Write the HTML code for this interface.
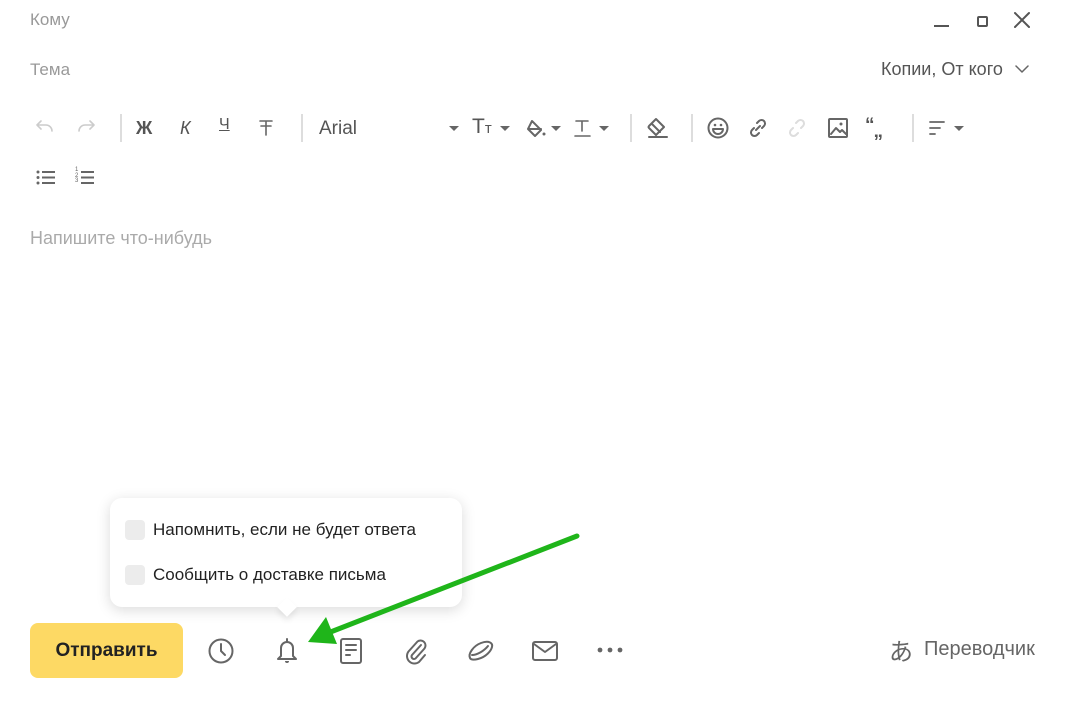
<!DOCTYPE html>
<html><head><meta charset="utf-8"><style>
body{margin:0;width:1076px;height:702px;background:#fff;font-family:"Liberation Sans",sans-serif;position:relative;overflow:hidden}
.a{position:absolute}
.g{color:#999;font-size:17px}
svg{position:absolute;overflow:visible}
.ic{stroke:#666;fill:none;stroke-width:2;stroke-linecap:round;stroke-linejoin:round}
.sep{position:absolute;width:2px;height:28px;background:#ddd;top:114px}
.pop{position:absolute;left:110px;top:498px;width:352px;height:109px;background:#fff;border-radius:12px;box-shadow:0 3px 14px rgba(0,0,0,.15)}
.cb{position:absolute;left:15px;width:20px;height:20px;border-radius:4px;background:#ececec}
.pt{position:absolute;left:43px;font-size:17px;color:#222}
</style></head><body>
<div class="a g" style="left:30px;top:10px">Кому</div>
<div class="a g" style="left:30px;top:60px">Тема</div>
<div class="a" style="left:881px;top:59px;font-size:18px;color:#555">Копии, От кого</div>
<svg style="left:1015px;top:64px" width="14" height="10"><path class="ic" style="stroke-width:1.5" d="M1 2l6 6 6-6"/></svg>
<div class="a" style="left:934px;top:25px;width:15px;height:2px;background:#555"></div>
<div class="a" style="left:977px;top:16px;width:7px;height:7px;border:2px solid #555;border-radius:2px"></div>
<svg style="left:1014px;top:12px" width="16" height="16"><path class="ic" style="stroke:#555" d="M1 1l14 14M15 1L1 15"/></svg>

<svg style="left:36px;top:120px" width="18" height="14"><path class="ic" style="stroke:#ccc;stroke-width:1.6" d="M5 1L1 5l4 4M1 5h9a6 6 0 016 6"/></svg>
<svg style="left:77px;top:120px" width="18" height="14"><path class="ic" style="stroke:#ccc;stroke-width:1.6" d="M13 1l4 4-4 4M17 5H8a6 6 0 00-6 6"/></svg>
<div class="sep" style="left:120px"></div>
<div class="a" style="left:136px;top:118px;font-size:18px;font-weight:bold;color:#555">Ж</div>
<div class="a" style="left:180px;top:118px;font-size:18px;font-style:italic;color:#555">К</div>
<div class="a" style="left:219px;top:116px;font-size:16px;color:#555;text-decoration:underline">Ч</div>
<svg style="left:259px;top:120px" width="14" height="16"><path class="ic" style="stroke-width:1.6" d="M1 1h12M7 1v14M2 6h10"/></svg>
<div class="sep" style="left:301px"></div>
<div class="a" style="left:319px;top:118px;font-size:19px;color:#555">Arial</div>
<svg style="left:449px;top:126px" width="10" height="6"><path d="M0 0h10L5 5z" fill="#666"/></svg>
<div class="a" style="left:472px;top:115px;font-size:21px;color:#555">T<span style="font-size:15px">т</span></div>
<svg style="left:500px;top:126px" width="10" height="6"><path d="M0 0h10L5 5z" fill="#666"/></svg>
<svg style="left:526px;top:118px" width="22" height="20"><path class="ic" d="M6 3l9 9-6 6-7-7z M2 11h13"/><circle cx="18" cy="16" r="1.5" fill="#666"/></svg>
<svg style="left:551px;top:126px" width="10" height="6"><path d="M0 0h10L5 5z" fill="#666"/></svg>
<svg style="left:575px;top:120px" width="16" height="18"><path class="ic" style="stroke-width:1.6" d="M1 1h12M7 1v10M0 16h15"/></svg>
<svg style="left:599px;top:126px" width="10" height="6"><path d="M0 0h10L5 5z" fill="#666"/></svg>
<div class="sep" style="left:630px"></div>
<svg style="left:646px;top:117px" width="22" height="22"><path class="ic" d="M10 2l8 8-8 8-7-7a1.5 1.5 0 010-2zM6 7l8 8M3 20h18"/></svg>
<div class="sep" style="left:691px"></div>
<svg style="left:707px;top:117px" width="22" height="22"><circle class="ic" cx="11" cy="11" r="9.5"/><path class="ic" d="M6 12h10a5 5 0 01-10 0z"/><circle cx="8" cy="8" r="1.3" fill="#666"/><circle cx="14" cy="8" r="1.3" fill="#666"/></svg>
<svg style="left:747px;top:117px" width="22" height="22"><path class="ic" d="M9 13l4-4M10 6l2-2a3.5 3.5 0 015 5l-2 2M12 16l-2 2a3.5 3.5 0 01-5-5l2-2"/></svg>
<svg style="left:786px;top:117px" width="22" height="22"><path class="ic" style="stroke:#ddd" d="M10 6l2-2a3.5 3.5 0 015 5l-2 2M12 16l-2 2a3.5 3.5 0 01-5-5l2-2"/></svg>
<svg style="left:828px;top:118px" width="20" height="20"><rect class="ic" x="1" y="1" width="18" height="18" rx="1"/><path class="ic" d="M3 16l5-6 4 4 2-2 4 4"/><circle cx="13" cy="6" r="1.5" fill="#666"/></svg>
<div class="a" style="left:865px;top:115px;font-size:19px;font-weight:bold;color:#555;letter-spacing:-1px">“<span style="position:relative;top:6px">„</span></div>
<div class="sep" style="left:912px"></div>
<svg style="left:929px;top:121px" width="16" height="14"><path class="ic" style="stroke-width:1.8" d="M1 1h14M1 7h10M1 13h5"/></svg>
<svg style="left:954px;top:126px" width="10" height="6"><path d="M0 0h10L5 5z" fill="#666"/></svg>
<svg style="left:36px;top:170px" width="20" height="15"><g fill="#666"><circle cx="2" cy="2" r="1.5"/><circle cx="2" cy="7.5" r="1.5"/><circle cx="2" cy="13" r="1.5"/><rect x="6" y="1" width="13" height="2"/><rect x="6" y="6.5" width="13" height="2"/><rect x="6" y="12" width="13" height="2"/></g></svg>
<div class="a" style="left:75px;top:168px;font-size:6px;line-height:5.5px;color:#666">1<br>2<br>3</div>
<svg style="left:81px;top:170px" width="14" height="15"><g fill="#666"><rect x="0" y="1" width="13" height="2"/><rect x="0" y="6.5" width="13" height="2"/><rect x="0" y="12" width="13" height="2"/></g></svg>

<div class="a" style="left:30px;top:228px;font-size:18px;color:#aaa">Напишите что-нибудь</div>

<div class="pop">
<div class="cb" style="top:22px"></div><div class="pt" style="top:22px">Напомнить, если не будет ответа</div>
<div class="cb" style="top:67px"></div><div class="pt" style="top:67px">Сообщить о доставке письма</div>
</div>
<div class="a" style="left:280px;top:600px;width:14px;height:14px;background:#fff;transform:rotate(45deg);box-shadow:3px 3px 6px rgba(0,0,0,.08)"></div>

<div class="a" style="left:30px;top:623px;width:153px;height:55px;background:#fdd964;border-radius:8px;font-size:19px;font-weight:bold;color:#222;text-align:center;line-height:55px">Отправить</div>
<svg style="left:208px;top:638px" width="26" height="26"><circle class="ic" cx="13" cy="13" r="11.5"/><path class="ic" d="M13 6v7l4 4"/></svg>
<svg style="left:275px;top:637px" width="24" height="28"><path class="ic" d="M12 2v2M6 11a6 6 0 0112 0v8l3 3H3l3-3z"/><path d="M10 24h4a2 2 0 01-4 0z" fill="#666"/></svg>
<svg style="left:340px;top:638px" width="22" height="26"><rect class="ic" x="1" y="1" width="20" height="24" rx="2"/><path class="ic" d="M6 7h10M6 12h10M6 17h4"/></svg>
<svg style="left:402px;top:637px" width="26" height="28"><path class="ic" d="M19 8l-9 10a2.5 2.5 0 003.5 3.5l9-10a5 5 0 00-7-7l-9 10a7.5 7.5 0 0010.5 10.5l6-7"/></svg>
<svg style="left:467px;top:640px" width="28" height="22"><path class="ic" d="M3 18C1 14 6 6 14 3s12 0 11 4-6 10-14 12c-4 1-7 1-8-1z M5 15c5 0 12-4 16-9"/></svg>
<svg style="left:532px;top:641px" width="26" height="20"><rect class="ic" x="1" y="1" width="24" height="18" rx="2"/><path class="ic" d="M2 3l11 8 11-8"/></svg>
<svg style="left:597px;top:647px" width="26" height="6"><circle cx="3" cy="3" r="2.4" fill="#666"/><circle cx="13" cy="3" r="2.4" fill="#666"/><circle cx="23" cy="3" r="2.4" fill="#666"/></svg>
<div class="a" style="left:889px;top:636px;font-size:24px;color:#666;font-family:'Noto Sans CJK JP',sans-serif;line-height:28px">あ</div>
<div class="a" style="left:924px;top:638px;font-size:20px;color:#666">Переводчик</div>

<svg style="left:0;top:0" width="1076" height="702"><path d="M577 536L328 633" stroke="#1fb51a" stroke-width="5" stroke-linecap="round"/><path d="M308 642L326 617L337 644z" fill="#1fb51a"/></svg>
</body></html>
